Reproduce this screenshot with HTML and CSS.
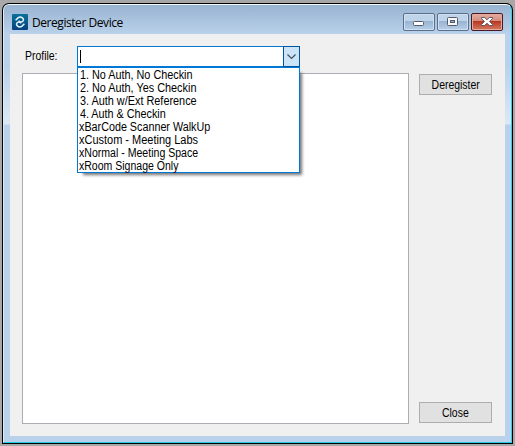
FILE: index.html
```html
<!DOCTYPE html>
<html lang="en">
<head>
<meta charset="utf-8">
<title>Deregister Device</title>
<link rel="stylesheet" href="styles.css">
</head>
<body>
<div class="window">
  <div class="frame">
    <header class="titlebar">
      <svg class="logo" width="16" height="16" viewBox="0 0 16 16">
        <defs><linearGradient id="lg" x2="0" y2="1"><stop stop-color="#087199"/><stop offset="1" stop-color="#07417f"/></linearGradient></defs>
        <rect width="16" height="16" rx="1" fill="url(#lg)"/>
        <path d="M3.6 6.2L6 3.9C7.4 2.8 9 2.8 10.4 3.9C12 5.2 11.7 6.8 10.3 7.6C8.8 8.4 7.8 7.8 6.6 6.9M12.4 9.8L10 12.1C8.6 13.2 7 13.2 5.6 12.1C4 10.8 4.3 9.2 5.7 8.4C7.2 7.6 8.2 8.2 9.4 9.1" fill="none" stroke="#e3f3fa" stroke-width="1.5"/>
      </svg>
      <h1 class="title">Deregister Device</h1>
      <div class="controls">
        <button class="ctl" aria-label="Minimize"><svg width="30" height="16"><rect x="9.5" y="7.5" width="10" height="4" rx="1" fill="#fff" stroke="#555b68"/></svg></button>
        <button class="ctl" aria-label="Maximize"><svg width="30" height="16"><rect x="9.5" y="3.5" width="10" height="8" rx="1" fill="#f7f7f7" stroke="#555b68"/><rect x="12.5" y="6.5" width="4" height="2" fill="#8eacd0" stroke="#555b68"/></svg></button>
        <button class="ctl ctl-close" aria-label="Close window"><svg width="30" height="16"><path d="M9.5 3.5h3.2l2.3 2.3 2.3-2.3h3.2v1l-2.9 3 2.9 3v1h-3.2L15 9.2l-2.3 2.3H9.5v-1l2.9-3-2.9-3z" fill="#fff" stroke="#5c5260"/></svg></button>
      </div>
    </header>
    <main class="client">
      <div class="profile">
        <span class="label">Profile:</span>
        <div class="combo">
          <span class="caret"></span>
          <span class="arrow"><svg width="15" height="19"><path d="M3.5 7.5l4 4 4-4" fill="none" stroke="#444f5c" stroke-width="1.2"/></svg></span>
          <ul class="options">
            <li class="o1">1. No Auth, No Checkin</li>
            <li class="o2">2. No Auth, Yes Checkin</li>
            <li class="o3">3. Auth w/Ext Reference</li>
            <li class="o4">4. Auth &amp; Checkin</li>
            <li class="o5">xBarCode Scanner WalkUp</li>
            <li class="o6">xCustom - Meeting Labs</li>
            <li class="o7">xNormal - Meeting Space</li>
            <li class="o8">xRoom Signage Only</li>
          </ul>
        </div>
      </div>
      <div class="body">
        <div class="devices"></div>
        <div class="actions">
          <button class="btn"><span class="btn-text">Deregister</span></button>
          <button class="btn"><span class="btn-text">Close</span></button>
        </div>
      </div>
    </main>
  </div>
</div>
</body>
</html>
```
FILE: styles.css
```css
* { box-sizing: border-box; }
html, body { margin: 0; height: 100%; }
body {
  background: #a8a8a8;
  font: 12px/13px "Liberation Sans", Arial, sans-serif;
  color: #000;
  overflow: hidden;
  padding: 3px 2px 2px;
}
.window {
  width: 511px;
  height: 441px;
  background: #000;
  border-radius: 7px 7px 0 0;
  padding: 1px;
}
.frame {
  height: 439px;
  border: 1px solid #f4fbff;
  border-left-color: #dceaf7;
  border-right-color: #35cdea;
  border-bottom-color: #25cbe6;
  border-radius: 6px 6px 0 0;
  padding: 0 6px;
  background: linear-gradient(#99b4d1, #b9d1ea 29px, #b9d1ea 60px, #dce9f5 119px, #b9d1ea 120px);
}
.titlebar {
  display: flex;
  height: 29px;
  padding-left: 2px;
}
.logo { margin-top: 9px; }
.title {
  margin: 9px 0 0 4px;
  font: 12px/18px "Open Sans", "Noto Sans", sans-serif;
  letter-spacing: -0.44px;
  white-space: nowrap;
}
.controls {
  display: flex;
  gap: 2px;
  margin: 8px 2px 0 auto;
}
.ctl {
  width: 32px;
  height: 18px;
  padding: 0;
  border: 1px solid #596f8c;
  border-radius: 2px;
  box-shadow: inset 0 0 0 1px #d0e0f1;
  background: linear-gradient(#bfd3e9 0 45%, #98b4d3 46%, #b7d0e8);
}
.ctl svg { display: block; }
.ctl-close {
  border-color: #4b1720;
  box-shadow: inset 0 0 0 1px #e4a99f;
  background: linear-gradient(#e4aca0, #d38a7c 45%, #b83822 46%, #d47b62);
}
.client {
  width: 495px;
  height: 402px;
  background: #f0f0f0;
  padding: 12px 13px 12px 12px;
}
.profile {
  display: flex;
  height: 27px;
}
.label {
  width: 55px;
  padding: 4px 0 0 3px;
  transform: scaleX(.87);
  transform-origin: 3px 0;
}
.combo {
  position: relative;
  display: flex;
  justify-content: space-between;
  width: 223px;
  height: 21px;
  border: 1px solid #0078d7;
  background: #fff;
}
.caret {
  width: 1px;
  height: 13px;
  margin: 3px 0 0 2px;
  background: #000;
}
.arrow {
  width: 17px;
  height: 21px;
  margin: -1px -1px 0 0;
  border: 1px solid #005499;
  background: #cce4f7;
}
.arrow svg { display: block; }
.options {
  position: absolute;
  z-index: 1;
  top: 20px;
  left: -1px;
  width: 223px;
  height: 106px;
  margin: 0;
  padding: 1px 0 0 1px;
  list-style: none;
  border: 1px solid #0078d7;
  background: #fff;
  box-shadow: 4px 4px 3px -2px rgba(0, 0, 0, .55);
  white-space: nowrap;
}
.options li {
  width: max-content;
  height: 13px;
  transform-origin: 0 0;
}
.options .o1, .options .o2, .options .o3, .options .o4 { padding-left: 1px; }
.o1 { transform: scaleX(.903); }
.o2 { transform: scaleX(.905); }
.o3 { transform: scaleX(.907); }
.o4 { transform: scaleX(.9); }
.o5 { transform: scaleX(.897); }
.o6 { transform: scaleX(.915); }
.o7 { transform: scaleX(.88); }
.o8 { transform: scaleX(.877); }
.body {
  display: flex;
  justify-content: space-between;
  height: 351px;
}
.devices {
  width: 387px;
  border: 1px solid #abadb3;
  background: #fff;
}
.actions {
  display: flex;
  flex-direction: column;
  justify-content: space-between;
  padding: 1px 0;
}
.btn {
  width: 73px;
  height: 21px;
  padding: 0;
  border: 1px solid #adadad;
  background: #e1e1e1;
  color: #000;
  font: 12px/18px "Liberation Sans", Arial, sans-serif;
}
.btn-text {
  display: inline-block;
  transform: scaleX(.87);
}
```
